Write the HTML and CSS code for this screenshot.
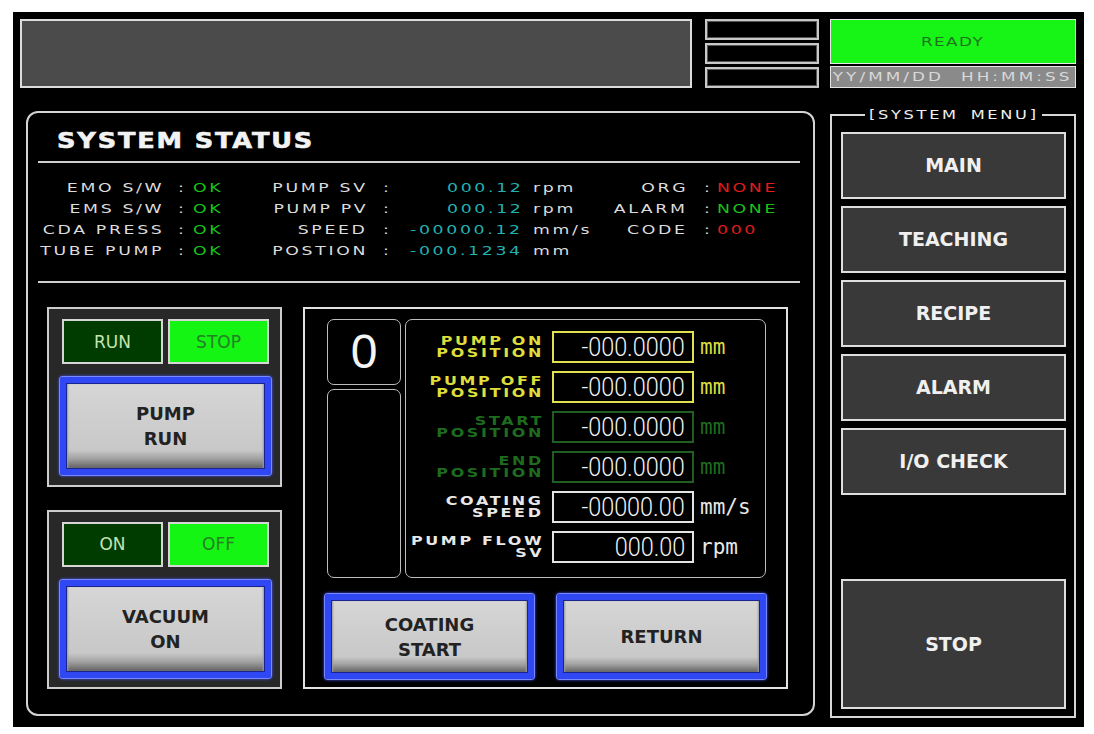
FILE: index.html
```html
<!DOCTYPE html>
<html lang="en">
<head>
<meta charset="utf-8">
<title>System Status</title>
<link rel="stylesheet" href="styles.css">
</head>
<body>
<div class="screen">
  <div class="topbar">
    <div class="title-bar"></div>
    <div class="slots">
      <div class="slot"></div>
      <div class="slot"></div>
      <div class="slot"></div>
    </div>
  </div>
  <div class="sys">
    <div class="ready"><span>READY</span></div>
    <div class="clock"><span>YY/MM/DD&nbsp; HH:MM:SS</span></div>
  </div>

  <main class="main">
    <h1 class="heading"><span>SYSTEM STATUS</span></h1>
    <div class="status">
      <div class="r"><span>EMO S/W</span></div><div class="c"><span>:</span></div><div class="l ok"><span>OK</span></div>
      <div class="r"><span>PUMP SV</span></div><div class="c"><span>:</span></div><div class="r num"><span>000.12</span></div><div class="l u"><span>rpm</span></div>
      <div class="r"><span>ORG</span></div><div class="c"><span>:</span></div><div class="l bad"><span>NONE</span></div>

      <div class="r"><span>EMS S/W</span></div><div class="c"><span>:</span></div><div class="l ok"><span>OK</span></div>
      <div class="r"><span>PUMP PV</span></div><div class="c"><span>:</span></div><div class="r num"><span>000.12</span></div><div class="l u"><span>rpm</span></div>
      <div class="r"><span>ALARM</span></div><div class="c"><span>:</span></div><div class="l ok"><span>NONE</span></div>

      <div class="r"><span>CDA PRESS</span></div><div class="c"><span>:</span></div><div class="l ok"><span>OK</span></div>
      <div class="r"><span>SPEED</span></div><div class="c"><span>:</span></div><div class="r num"><span>-00000.12</span></div><div class="l u"><span>mm/s</span></div>
      <div class="r"><span>CODE</span></div><div class="c"><span>:</span></div><div class="l bad"><span>000</span></div>

      <div class="r"><span>TUBE PUMP</span></div><div class="c"><span>:</span></div><div class="l ok"><span>OK</span></div>
      <div class="r"><span>POSTION</span></div><div class="c"><span>:</span></div><div class="r num"><span>-000.1234</span></div><div class="l u"><span>mm</span></div>
      <div></div><div></div><div></div>
    </div>

    <div class="work">
      <div class="controls">
        <section class="ctl">
          <div class="lamps">
            <div class="lamp dark">RUN</div>
            <div class="lamp lit">STOP</div>
          </div>
          <button class="btn3d tall">PUMP<br>RUN</button>
        </section>
        <section class="ctl">
          <div class="lamps">
            <div class="lamp dark">ON</div>
            <div class="lamp lit">OFF</div>
          </div>
          <button class="btn3d tall">VACUUM<br>ON</button>
        </section>
      </div>

      <section class="coat">
        <div class="display">
          <div class="side">
            <div class="box digit">0</div>
            <div class="box blank"></div>
          </div>
          <div class="box params">
            <div class="lbl yel"><span>PUMP ON<br>POSITION</span></div>
            <div class="val yel"><span>-000.0000</span></div>
            <div class="unit yel">mm</div>

            <div class="lbl yel"><span>PUMP OFF<br>POSITION</span></div>
            <div class="val yel"><span>-000.0000</span></div>
            <div class="unit yel">mm</div>

            <div class="lbl grn"><span>START<br>POSITION</span></div>
            <div class="val grn"><span>-000.0000</span></div>
            <div class="unit grn">mm</div>

            <div class="lbl grn"><span>END<br>POSITION</span></div>
            <div class="val grn"><span>-000.0000</span></div>
            <div class="unit grn">mm</div>

            <div class="lbl wht"><span>COATING<br>SPEED</span></div>
            <div class="val wht"><span>-00000.00</span></div>
            <div class="unit wht">mm/s</div>

            <div class="lbl wht"><span>PUMP FLOW<br>SV</span></div>
            <div class="val wht"><span>000.00</span></div>
            <div class="unit wht">rpm</div>
          </div>
        </div>
        <div class="actions">
          <button class="btn3d wide">COATING<br>START</button>
          <button class="btn3d wide">RETURN</button>
        </div>
      </section>
    </div>
  </main>

  <fieldset class="menu">
    <legend><span>[SYSTEM MENU]</span></legend>
    <button class="mbtn">MAIN</button>
    <button class="mbtn">TEACHING</button>
    <button class="mbtn">RECIPE</button>
    <button class="mbtn">ALARM</button>
    <button class="mbtn">I/O CHECK</button>
    <button class="mbtn stop">STOP</button>
  </fieldset>
</div>
</body>
</html>
```

FILE: styles.css
```css
* { box-sizing: border-box; }
html, body { margin: 0; padding: 0; background: #ffffff; }
body { padding: 12px 0 0 13px; }

.screen {
  width: 1071px;
  height: 715px;
  background: #000;
  display: grid;
  grid-template-columns: 799px 246px;
  grid-template-rows: 69px 610px;
  column-gap: 11px;
  row-gap: 20px;
  padding: 7px 8px 9px 7px;
  font-family: "DejaVu Sans", sans-serif;
  color: #e6e6e6;
}

/* ---------- top row ---------- */
.topbar { display: flex; gap: 13px; }
.title-bar {
  flex: 0 0 672px;
  background: #4b4b4b;
  border: 2px solid #dcdcdc;
  height: 69px;
}
.slots { flex: 0 0 114px; display: flex; flex-direction: column; gap: 3px; }
.slot {
  flex: 1;
  background: #000;
  border: 2px solid #c8c8c8;
  box-shadow: inset 0 0 0 1px #555;
}
.sys { display: flex; flex-direction: column; gap: 2px; }
.ready {
  height: 45px;
  background: #16f516;
  border: 1px solid #e8e8e8;
  color: #1f731f;
  display: flex; align-items: center; justify-content: center;
  font-size: 12px;
  letter-spacing: 1px;
}
.ready span { display: inline-block; transform: scaleX(1.4); }
.clock {
  flex: 1;
  background: #8a8a8a;
  border: 1px solid #e4e4e4;
  color: #d8d8d8;
  display: flex; align-items: center; justify-content: center;
  font-size: 12px;
  letter-spacing: 2.2px;
  white-space: nowrap;
}
.clock span { display: inline-block; transform: scaleX(1.4); }

/* ---------- main frame ---------- */
.main {
  margin: 3px 4px 2px 6px;
  border: 2px solid #d4d4d4;
  border-radius: 12px;
  padding: 15px 13px 0 10px;
  display: flex;
  flex-direction: column;
}
.heading {
  margin: 0 0 0 19px;
  font: bold 21px/26px "DejaVu Sans", sans-serif;
  letter-spacing: 1.5px;
  color: #f2f2f2;
  -webkit-text-stroke: 0.6px #f2f2f2;
}
.heading span { display: inline-block; transform: scaleX(1.22); transform-origin: left center; }

.status {
  margin-top: 7px;
  border-top: 2px solid #cfcfcf;
  border-bottom: 2px solid #cfcfcf;
  padding: 14px 0 20px;
  display: grid;
  grid-template-columns: 124px 31px 80px 93px 34px 121px 79px 86px 31px 1fr;
  grid-auto-rows: 21px;
  align-items: center;
  font-size: 13px;
  letter-spacing: 2px;
  white-space: nowrap;
  color: #dcdcdc;
}
.status span { display: inline-block; transform: scaleX(1.33); }
.status .r { text-align: right; }
.status .r span { transform-origin: right center; margin-right: -2px; }
.status .l span { transform-origin: left center; }
.status .c { text-align: center; padding-left: 10px; }
.status .num { color: #22b2b2; }
.status .u { padding-left: 12px; color: #dcdcdc; }
.status .ok { color: #18c418; }
.status .bad { color: #e01c1c; }
.status > div:nth-child(10n+5) { padding-left: 8px; }
.status > div:nth-child(10n+9) { padding-left: 14px; }

/* ---------- work area ---------- */
.work {
  margin-top: 24px;
  padding-left: 9px;
  display: flex;
  gap: 21px;
  height: 382px;
}
.controls { flex: 0 0 235px; display: flex; flex-direction: column; gap: 23px; }
.ctl {
  flex: 1;
  background: #282828;
  border: 2px solid #cdcdcd;
  padding: 10px 9px 0 11px;
}
.lamps {
  display: grid;
  grid-template-columns: 1fr 1fr;
  gap: 5px;
  margin: 0 2px;
  height: 45px;
}
.lamp {
  border: 2px solid #d6d6d6;
  display: flex; align-items: center; justify-content: center;
  font-size: 17px;
}
.lamp.dark { background: #003c00; color: #c4e4b0; }
.lamp.lit { background: #14f514; color: #238023; }

.btn3d {
  display: flex; align-items: center; justify-content: center;
  text-align: center;
  border: 6px solid #3048f4;
  border-radius: 3px;
  background: linear-gradient(to bottom, #d6d6d6 0%, #c8c8c8 78%, #a2a2a2 88%, #5c5c5c 100%);
  box-shadow: inset 0 0 0 1px #1a2490, inset 2px 0 2px #9a9a9a, inset -2px 0 2px #9a9a9a, 0 0 0 1px #7888ff, 0 0 3px 1px #4256ff;
  font: bold 18px/25px "DejaVu Sans", sans-serif;
  color: #222;
  padding: 0;
}
.btn3d.tall { width: 100%; height: 98px; margin-top: 13px; }

.coat {
  flex: 0 0 485px;
  border: 2px solid #e2e2e2;
  padding: 10px 20px 0 22px;
}
.display { display: flex; gap: 4px; height: 259px; }
.box { border: 1px solid #bcbcbc; border-radius: 7px; }
.side { flex: 0 0 74px; display: flex; flex-direction: column; gap: 4px; }
.digit {
  height: 66px;
  display: flex; align-items: center; justify-content: center;
  font: 48px/1 "Liberation Sans", sans-serif;
  color: #f4f4f4;
}
.blank { flex: 1; }
.params {
  flex: 1;
  padding: 11px 0;
  display: grid;
  grid-template-columns: 146px 142px 1fr;
  grid-auto-rows: 32px;
  row-gap: 8px;
  align-items: center;
}
.lbl {
  text-align: right;
  padding-right: 8px;
  font: bold 12px/12px "DejaVu Sans", sans-serif;
  letter-spacing: 2px;
  white-space: nowrap;
}
.lbl span { display: inline-block; transform: scaleX(1.33); transform-origin: right center; }
.val {
  height: 32px;
  border: 2px solid;
  text-align: right;
  padding-right: 7px;
  font: 300 26px/28px Roboto, "Liberation Sans", sans-serif;
  color: #f2f2f2;
  white-space: nowrap;
}
.val span { display: inline-block; transform: scaleX(0.9); transform-origin: right center; }
.unit {
  padding-left: 6px;
  font: 21px/1 "DejaVu Sans Mono", monospace;
}
.yel { color: #dede3c; border-color: #e0e050; }
.grn { color: #1e6c1e; border-color: #205e20; }
.wht { color: #e8e8e8; border-color: #e4e4e4; }
.val.yel, .val.grn, .val.wht { color: #f2f2f2; }

.actions {
  display: flex;
  gap: 23px;
  margin: 16px 0 0 -2px;
}
.btn3d.wide { width: 209px; height: 85px; }

/* ---------- system menu ---------- */
.menu {
  margin: 0;
  min-width: 0;
  border: 2px solid #d6d6d6;
  padding: 10px 8px 7px 9px;
  display: flex;
  flex-direction: column;
  gap: 7px;
}
.menu legend {
  margin: 0 auto;
  padding: 0 26px;
  font: 12px/14px "DejaVu Sans", sans-serif;
  letter-spacing: 2px;
  word-spacing: 3px;
  color: #f0f0f0;
  white-space: nowrap;
}
.menu legend span { display: inline-block; transform: scaleX(1.35); }
.mbtn {
  height: 67px;
  flex: 0 0 67px;
  background: #393939;
  border: 2px solid #dedede;
  font: bold 19px/1 "DejaVu Sans", sans-serif;
  color: #f0f0f0;
  padding: 0;
}
.mbtn.stop { margin-top: auto; flex: 0 0 130px; height: 130px; }
```
